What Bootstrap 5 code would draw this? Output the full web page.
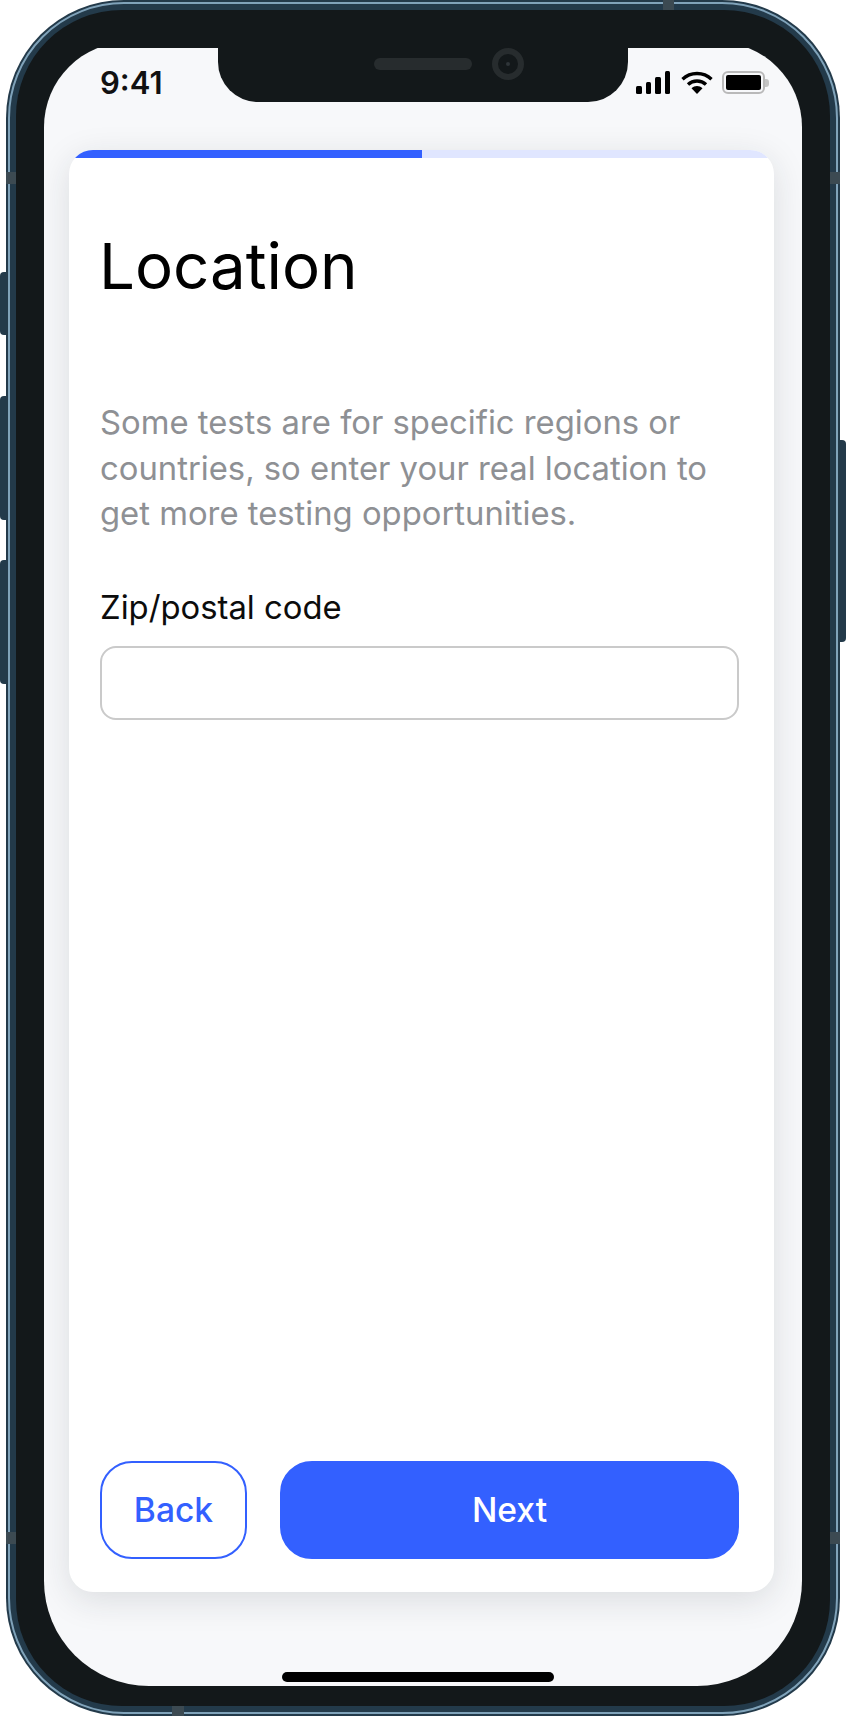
<!DOCTYPE html>
<html lang="en">
<head>
    <meta charset="UTF-8">
    <meta name="viewport" content="width=device-width, initial-scale=1.0">
    <title>Location</title>
    <link href="https://cdn.jsdelivr.net/npm/bootstrap@5.3.0/dist/css/bootstrap.min.css" rel="stylesheet">
    <style>
        html, body {
            background: #fff;
            font-family: Inter, "Liberation Sans", sans-serif;
        }
        body { width: 846px; height: 1716px; overflow: hidden; }
        .page-wrap { padding: 0 6px; }
        .phone-shell {
            position: relative;
            height: 1716px;
            padding: 2px;
            background: #233a4a;
            border-radius: 118px;
        }
        .phone-line {
            height: 100%;
            padding: 6px;
            border: 2px solid #80a3ba;
            border-radius: 116px;
        }
        .phone-bezel {
            height: 100%;
            padding: 38px 28px 20px;
            background: #13181a;
            border-radius: 106px;
        }
        .phone-screen {
            position: relative;
            isolation: isolate;
            height: 100%;
            overflow: hidden;
        }
        .screen-fill {
            position: absolute;
            z-index: -1;
            top: -6px;
            right: 0;
            bottom: 0;
            left: 0;
            background: #f7f8fa;
            border-radius: 85px 85px 105px 105px;
        }
        .side-key {
            position: absolute;
            left: -6px;
            width: 6px;
            background: #233a4a;
            border-radius: 4px 0 0 4px;
        }
        .side-key.key-mute { top: 272px; height: 63px; }
        .side-key.key-up { top: 396px; height: 124px; }
        .side-key.key-down { top: 560px; height: 124px; }
        .side-key.key-power {
            left: auto;
            right: -6px;
            top: 440px;
            height: 202px;
            border-radius: 0 4px 4px 0;
        }
        .band-mark { position: absolute; background: #3c4a52; }
        .band-mark.mark-top { top: 0; left: 657px; width: 11px; height: 10px; }
        .band-mark.mark-bottom { bottom: 0; left: 166px; width: 12px; height: 10px; }
        .band-mark.mark-left-a { left: 0; top: 172px; width: 10px; height: 12px; }
        .band-mark.mark-left-b { left: 0; top: 1532px; width: 10px; height: 12px; }
        .band-mark.mark-right-a { right: 0; top: 172px; width: 10px; height: 12px; }
        .band-mark.mark-right-b { right: 0; top: 1532px; width: 10px; height: 12px; }
        .notch {
            position: absolute;
            top: 0;
            left: 174px;
            width: 410px;
            height: 54px;
            padding-left: 156px;
            gap: 20px;
            background: #13181a;
            border-radius: 0 0 40px 40px;
        }
        .notch-speaker {
            width: 98px;
            height: 12px;
            margin-top: 10px;
            background: #272c2e;
            border-radius: 6px;
        }
        .notch-camera {
            width: 32px;
            height: 32px;
            border: 6px solid #272c2e;
            border-radius: 50%;
        }
        .notch-lens {
            width: 4px;
            height: 4px;
            background: #2f3538;
            border-radius: 50%;
        }
        .status-row {
            height: 102px;
            padding: 23px 33px 0 56px;
        }
        .status-time {
            font-size: 31px;
            font-weight: 600;
            line-height: 24px;
            color: #111;
        }
        .signal-bar { width: 5.5px; background: #000; border-radius: 1.5px; }
        .status-wifi { margin-left: 11px; }
        .battery-wrap { margin-left: 9px; }
        .battery-case {
            width: 43px;
            height: 23px;
            padding: 2px;
            border: 2px solid #b9b9b9;
            border-radius: 6px;
        }
        .battery-fill { height: 100%; background: #000; border-radius: 2px; }
        .battery-nub {
            width: 4px;
            height: 8px;
            background: #c4c4c4;
            border-radius: 0 3px 3px 0;
        }
        .form-card {
            height: 1442px;
            margin: 0 28px 0 25px;
            overflow: hidden;
            border: 0;
            border-radius: 24px;
            box-shadow: 0 8px 34px rgba(30, 40, 50, .13);
        }
        .step-track {
            height: 8px;
            background: #e0e6ff;
            border-radius: 0;
        }
        .step-fill { width: 50%; background: #3360ff; }
        .form-body { padding: 0 35px 33px 31px; }
        .form-title {
            margin: 66px 0 0 -1px;
            font-size: 63.6px;
            font-weight: 370;
            line-height: 84px;
            color: #000;
        }
        .form-intro {
            margin: 92px 0 0;
            font-size: 32.8px;
            line-height: 45.5px;
            color: #8e9094;
        }
        .zip-label {
            margin: 47px 0 0;
            font-size: 32.8px;
            line-height: 46px;
            color: #0c0c0c;
        }
        .zip-input {
            height: 74px;
            margin: 16px 0 0;
            border: 2px solid #cacaca;
            border-radius: 16px;
            font-size: 32px;
        }
        .action-row { gap: 33px; }
        .action-btn {
            height: 98px;
            padding: 0;
            font-size: 33.6px;
            font-weight: 500;
            border-radius: 32px;
            border-width: 2px;
        }
        .btn-back { width: 147px; color: #3360ff; background: #fff; border-color: #3360ff; }
        .btn-next { color: #fff; background: #3360ff; border-color: #3360ff; }
        .home-bar {
            position: absolute;
            left: 238px;
            bottom: 4px;
            width: 272px;
            height: 10px;
            background: #000;
            border-radius: 5px;
        }
    </style>
</head>
<body>
    <div class="page-wrap">
        <div class="phone-shell">
            <div class="side-key key-mute"></div>
            <div class="side-key key-up"></div>
            <div class="side-key key-down"></div>
            <div class="side-key key-power"></div>
            <div class="phone-line">
                <div class="phone-bezel">
                    <div class="phone-screen d-flex flex-column">
                        <div class="screen-fill"></div>
                        <!-- Notch -->
                        <div class="notch d-flex align-items-start">
                            <div class="notch-speaker"></div>
                            <div class="notch-camera d-flex align-items-center justify-content-center"><div class="notch-lens"></div></div>
                        </div>
                        <!-- Status bar -->
                        <div class="status-row d-flex justify-content-between align-items-start">
                            <div class="status-time">9:41</div>
                            <div class="d-flex align-items-start">
                                <div class="d-flex align-items-end gap-1" style="height:23px">
                                    <div class="signal-bar" style="height:8px"></div>
                                    <div class="signal-bar" style="height:12px"></div>
                                    <div class="signal-bar" style="height:17px"></div>
                                    <div class="signal-bar" style="height:23px"></div>
                                </div>
                                <svg class="status-wifi" width="32" height="23" viewBox="0 0 32 23">
                                    <path d="M1.5 8.2C9.5 .6 22.5 .6 30.5 8.2" fill="none" stroke="#000" stroke-width="3.4"/>
                                    <path d="M7 13.4C12 8.8 20 8.8 25 13.4" fill="none" stroke="#000" stroke-width="3.4"/>
                                    <path d="M10.5 17.2C13.8 14.2 18.2 14.2 21.5 17.2L16 23Z" fill="#000"/>
                                </svg>
                                <div class="battery-wrap d-flex align-items-center">
                                    <div class="battery-case"><div class="battery-fill"></div></div>
                                    <div class="battery-nub"></div>
                                </div>
                            </div>
                        </div>
                        <!-- Form card -->
                        <div class="card form-card">
                            <div class="progress step-track">
                                <div class="progress-bar step-fill"></div>
                            </div>
                            <div class="form-body d-flex flex-column flex-grow-1">
                                <h1 class="form-title">Location</h1>
                                <p class="form-intro">Some tests are for specific regions or countries, so enter your real location to get more testing opportunities.</p>
                                <label class="zip-label form-label" for="zip">Zip/postal code</label>
                                <input class="form-control zip-input" id="zip" type="text">
                                <div class="action-row d-flex mt-auto">
                                    <button type="button" class="btn action-btn btn-back">Back</button>
                                    <button type="button" class="btn action-btn btn-next flex-grow-1">Next</button>
                                </div>
                            </div>
                        </div>
                        <div class="home-bar"></div>
                    </div>
                </div>
            </div>
            <div class="band-mark mark-top"></div>
            <div class="band-mark mark-bottom"></div>
            <div class="band-mark mark-left-a"></div>
            <div class="band-mark mark-left-b"></div>
            <div class="band-mark mark-right-a"></div>
            <div class="band-mark mark-right-b"></div>
        </div>
    </div>
    <script src="https://cdn.jsdelivr.net/npm/bootstrap@5.3.0/dist/js/bootstrap.bundle.min.js"></script>
</body>
</html>
